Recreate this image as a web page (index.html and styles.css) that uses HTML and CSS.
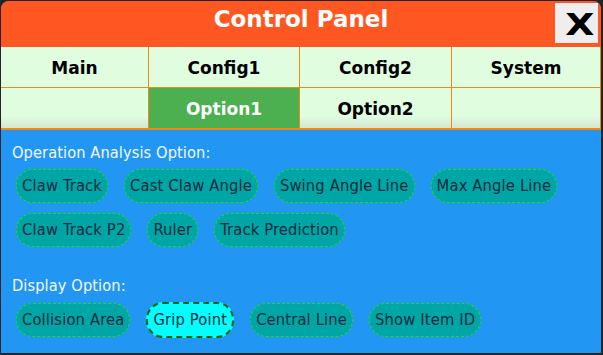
FILE: index.html
```html
<!DOCTYPE html>
<html lang="en">
<head>
<meta charset="utf-8">
<title>Control Panel</title>
<link rel="stylesheet" href="styles.css">
</head>
<body>
<div class="panel">
  <header class="panel-header">
    <h1 class="panel-title">Control Panel</h1>
    <button class="close-btn" type="button"><span class="close-x">X</span></button>
  </header>
  <nav class="tabs">
    <div class="tab">Main</div>
    <div class="tab">Config1</div>
    <div class="tab">Config2</div>
    <div class="tab">System</div>
    <div class="tab sub"></div>
    <div class="tab sub active">Option1</div>
    <div class="tab sub">Option2</div>
    <div class="tab sub"></div>
  </nav>
  <main class="content">
    <section class="group">
      <div class="group-label">Operation Analysis Option:</div>
      <div class="chips">
        <span class="chip">Claw Track</span>
        <span class="chip">Cast Claw Angle</span>
        <span class="chip">Swing Angle Line</span>
        <span class="chip">Max Angle Line</span>
        <span class="chip">Claw Track P2</span>
        <span class="chip">Ruler</span>
        <span class="chip">Track Prediction</span>
      </div>
    </section>
    <section class="group group-display">
      <div class="group-label">Display Option:</div>
      <div class="chips">
        <span class="chip">Collision Area</span>
        <span class="chip selected">Grip Point</span>
        <span class="chip">Central Line</span>
        <span class="chip">Show Item ID</span>
      </div>
    </section>
  </main>
</div>
</body>
</html>
```

FILE: styles.css
```css
html, body {
  margin: 0;
  padding: 0;
}
body {
  background: #232323;
  width: 603px;
  height: 355px;
  overflow: hidden;
  font-family: "DejaVu Sans", Verdana, sans-serif;
}
.panel {
  margin: 1px 0 0 1px;
  width: 600px;
  height: 352px;
  display: flex;
  flex-direction: column;
  background: #2196f3;
  border-radius: 8px 8px 0 0;
  overflow: hidden;
}
.panel-header {
  position: relative;
  height: 46px;
  background: #ff5722;
  display: flex;
  justify-content: center;
  align-items: flex-start;
  box-sizing: border-box;
  padding-top: 5px;
}
.panel-title {
  margin: 0;
  font-size: 23px;
  font-weight: bold;
  color: #ffffff;
  line-height: normal;
}
.close-btn {
  position: absolute;
  top: 2px;
  right: 3px;
  width: 43px;
  height: 40px;
  border: none;
  padding: 0;
  background: #eeeeee;
  display: flex;
  align-items: center;
  justify-content: center;
  font-family: "DejaVu Sans", Verdana, sans-serif;
  cursor: pointer;
}
.close-x {
  display: inline-block;
  font-size: 31px;
  font-weight: bold;
  color: #000;
  line-height: 1;
  transform: translate(3px, 1px) scaleX(1.22);
}
.tabs {
  display: grid;
  grid-template-columns: 148px 151px 152px 149px;
  grid-template-rows: 41px 42px;
}
.tab {
  background: #e0fde0;
  border-right: 1px solid #f28a10;
  border-bottom: 1px solid #f28a10;
  display: flex;
  align-items: center;
  justify-content: center;
  font-size: 17px;
  font-weight: bold;
  color: #000;
  padding-top: 2px;
}
.tab.sub {
  border-bottom-width: 2px;
  background: linear-gradient(to bottom, #e0fde0 0%, #e0fde0 70%, #d3e6d3 100%);
}
.tab.active {
  background: #4caf50;
  color: #ffffff;
}
.content {
  flex: 1;
  padding: 14px 10px 0 10px;
}
.group-label {
  color: #f4f8ff;
  font-family: "DejaVu Sans Condensed", "DejaVu Sans", sans-serif;
  font-stretch: condensed;
  font-size: 16.3px;
  letter-spacing: 0.08px;
  line-height: 18px;
  margin-left: 1px;
}
.chips {
  display: flex;
  flex-wrap: wrap;
  align-items: center;
  gap: 10px 16px;
  margin: 7px 5px 0 5px;
}
.chip {
  display: inline-block;
  background: #00a6a6;
  border: 1px dashed #1ee01e;
  border-radius: 17px;
  padding: 7px 5px;
  font-family: "DejaVu Sans Condensed", "DejaVu Sans", sans-serif;
  font-stretch: condensed;
  font-size: 16.4px;
  letter-spacing: 0.15px;
  line-height: 18px;
  color: #0b2a3c;
  white-space: nowrap;
}
.chip.selected {
  background: #00ffff;
  border: 2px dashed #0b650b;
}
.group-display {
  margin-top: 30px;
}
```
